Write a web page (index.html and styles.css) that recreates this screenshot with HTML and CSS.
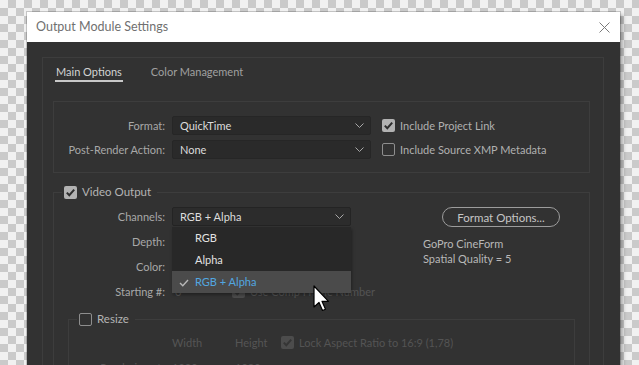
FILE: index.html
```html
<!DOCTYPE html>
<html lang="en">
  <head>
    <meta charset="UTF-8" />
    <title>Output Module Settings</title>
    <link rel="stylesheet" href="styles.css">
  </head>
  <body>
    <div class="dialog">
      <div class="titlebar">
        <span class="title">Output Module Settings</span>
        <svg class="close" width="11" height="11" viewBox="0 0 11 11">
          <path d="M0.5 0.5 L10.5 10.5 M10.5 0.5 L0.5 10.5" stroke="#7a7a7a" stroke-width="1" fill="none" />
        </svg>
      </div>
      <div class="content">
        <div class="tabpanel">
          <div class="tabs">
            <span class="tab active">Main Options</span>
            <span class="tab">Color Management</span>
          </div>

          <div class="group">
            <div class="row">
              <span class="lbl">Format:</span>
              <div class="select wide">
                <span>QuickTime</span>
                <svg class="chev" width="9" height="5" viewBox="0 0 9 5"><path d="M0.5 0.5 L4.5 4.5 L8.5 0.5" stroke="#a8a8a8" fill="none" /></svg>
              </div>
              <span class="check">
                <span class="cb on"><svg width="13" height="13" viewBox="0 0 13 13"><path d="M2.8 6.6 L5.3 9.2 L10.2 3.6" stroke="#2e2e2e" stroke-width="2" fill="none" /></svg></span>
                Include Project Link
              </span>
            </div>
            <div class="row">
              <span class="lbl">Post-Render Action:</span>
              <div class="select wide">
                <span>None</span>
                <svg class="chev" width="9" height="5" viewBox="0 0 9 5"><path d="M0.5 0.5 L4.5 4.5 L8.5 0.5" stroke="#a8a8a8" fill="none" /></svg>
              </div>
              <span class="check">
                <span class="cb"></span>
                Include Source XMP Metadata
              </span>
            </div>
          </div>

          <fieldset class="box">
            <legend>
              <span class="cb on"><svg width="13" height="13" viewBox="0 0 13 13"><path d="M2.8 6.6 L5.3 9.2 L10.2 3.6" stroke="#2e2e2e" stroke-width="2" fill="none" /></svg></span>
              Video Output
            </legend>
            <div class="vbody">
              <div class="fields">
                <div class="row">
                  <span class="lbl">Channels:</span>
                  <div class="select-wrap">
                    <div class="select open">
                      <span>RGB + Alpha</span>
                      <svg class="chev" width="9" height="5" viewBox="0 0 9 5"><path d="M0.5 0.5 L4.5 4.5 L8.5 0.5" stroke="#a8a8a8" fill="none" /></svg>
                    </div>
                    <ul class="popup">
                      <li>RGB</li>
                      <li>Alpha</li>
                      <li class="sel">
                        <svg class="tick" width="10" height="8" viewBox="0 0 10 8"><path d="M1 4 L3.8 6.8 L9 1" stroke="#b8b8b8" stroke-width="1.4" fill="none" /></svg>
                        RGB + Alpha
                      </li>
                    </ul>
                  </div>
                </div>
                <div class="row">
                  <span class="lbl">Depth:</span>
                  <div class="select"></div>
                </div>
                <div class="row">
                  <span class="lbl">Color:</span>
                  <div class="select"></div>
                </div>
                <div class="row">
                  <span class="lbl">Starting #:</span>
                  <span class="num">0</span>
                  <span class="check dim">
                    <span class="cb on"><svg width="13" height="13" viewBox="0 0 13 13"><path d="M2.8 6.6 L5.3 9.2 L10.2 3.6" stroke="#353535" stroke-width="2" fill="none" /></svg></span>
                    Use Comp Frame Number
                  </span>
                </div>
              </div>
              <div class="side">
                <button class="pill">Format Options...</button>
                <div class="info">GoPro CineForm<br />Spatial Quality = 5</div>
              </div>
            </div>

            <fieldset class="box inner">
              <legend>
                <span class="cb"></span>
                Resize
              </legend>
              <div class="rbody">
                <div class="rrow">
                  <span class="rlbl"></span>
                  <span class="col">Width</span>
                  <span class="col">Height</span>
                  <span class="check dim">
                    <span class="cb on"><svg width="13" height="13" viewBox="0 0 13 13"><path d="M2.8 6.6 L5.3 9.2 L10.2 3.6" stroke="#353535" stroke-width="2" fill="none" /></svg></span>
                    Lock Aspect Ratio to 16:9 (1,78)
                  </span>
                </div>
                <div class="rrow">
                  <span class="rlbl">Rendering at:</span>
                  <span class="col">1920</span>
                  <span class="col">1080</span>
                </div>
              </div>
            </fieldset>
          </fieldset>
        </div>
      </div>
    </div>

    <svg class="cursor" width="18" height="28" viewBox="0 0 18 28">
      <path d="M1 1 L1 22 L6 17.5 L9.5 25.5 L12.5 24.2 L9 16.3 L15.5 16.3 Z" fill="#ffffff" stroke="#000000" stroke-width="1.2" stroke-linejoin="round" />
    </svg>
  </body>
</html>
```

FILE: styles.css
```css
* {
  box-sizing: border-box;
  margin: 0;
  padding: 0;
}
body {
  height: 365px;
  overflow: hidden;
  font-family: "Lato", "Liberation Sans", sans-serif;
  font-size: 11px;
  line-height: 16px;
  color: #a8a8a8;
  background-color: #f1f1f1;
  background-image:
    linear-gradient(45deg, #cacaca 25%, transparent 25%, transparent 75%, #cacaca 75%),
    linear-gradient(45deg, #cacaca 25%, transparent 25%, transparent 75%, #cacaca 75%);
  background-size: 16px 16px;
  background-position: 0 0, 8px 8px;
  position: relative;
}
.dialog {
  width: 593px;
  margin: 12px 0 0 27px;
  box-shadow: 0 0 0 1px rgba(0, 0, 0, 0.18), 3px 3px 4px rgba(0, 0, 0, 0.3);
}
.titlebar {
  height: 30px;
  background: #ffffff;
  display: flex;
  align-items: center;
  justify-content: space-between;
  padding: 0 10px 0 9px;
}
.title {
  font-size: 12.5px;
  color: #707070;
}
.content {
  background: #323232;
  padding: 15px 16px 0 15px;
  height: 340px;
}
.tabpanel {
  border: 1px solid #3d3d3d;
  border-bottom: none;
  height: 100%;
}
.tabs {
  display: flex;
  gap: 27px;
  padding: 6px 0 0 12px;
}
.tab {
  padding: 0 1px;
  border-bottom: 2px solid transparent;
  color: #a0a0a0;
  font-size: 11px;
}
.tab.active {
  color: #d2d2d2;
  border-bottom-color: #c8c8c8;
}
.group {
  margin: 19px 13px 0 10px;
  border: 1px solid #3d3d3d;
  padding: 14px 0 13px;
  display: flex;
  flex-direction: column;
  gap: 5px;
}
.row {
  display: flex;
  align-items: center;
  height: 19px;
}
.lbl {
  width: 111px;
  text-align: right;
  margin-right: 7px;
  flex-shrink: 0;
}
.select {
  position: relative;
  width: 179px;
  height: 19px;
  background: #2a2a2a;
  border: 1px solid #262626;
  border-radius: 2px;
  color: #dcdcdc;
  padding-left: 7px;
  display: flex;
  align-items: center;
}
.select.wide {
  width: 199px;
}
.select.open {
  background: #2c2c2c;
  border-color: #242424;
}
.chev {
  position: absolute;
  right: 6px;
  top: 6px;
}
.check {
  display: flex;
  align-items: center;
  gap: 5px;
  margin-left: 11px;
  color: #b0b0b0;
  white-space: nowrap;
}
.check.dim {
  color: #545454;
}
.cb {
  width: 13px;
  height: 13px;
  border: 1.5px solid #8e8e8e;
  border-radius: 2px;
  flex-shrink: 0;
  position: relative;
}
.cb.on {
  background: #b2b2b2;
  border: none;
}
.cb svg {
  display: block;
}
.dim .cb.on {
  background: #4c4c4c;
}
fieldset.box {
  margin: 11px 13px 0 10px;
  border: 1px solid #3d3d3d;
  border-bottom: none;
  padding: 7px 0 0;
  min-width: 0;
  height: 200px;
}
fieldset.box legend {
  margin-left: 8px;
  padding: 0 6px 0 2px;
  display: flex;
  align-items: center;
  gap: 5px;
  height: 16px;
  color: #b4b4b4;
  font-size: 11.5px;
}
.vbody {
  display: flex;
}
.fields {
  width: 297px;
  flex-shrink: 0;
  display: flex;
  flex-direction: column;
  gap: 6px;
}
.select-wrap {
  position: relative;
}
.popup {
  position: absolute;
  left: 0;
  top: 20px;
  width: 179px;
  list-style: none;
  background: #282828;
  box-shadow: 1px 2px 3px rgba(0, 0, 0, 0.35);
  z-index: 5;
}
.popup li {
  height: 22px;
  line-height: 22px;
  padding-left: 23px;
  color: #e2e2e2;
  position: relative;
}
.popup li.sel {
  background: #4b4b4b;
  color: #52a7e0;
}
.tick {
  position: absolute;
  left: 7px;
  top: 8px;
}
.num {
  width: 60px;
  flex-shrink: 0;
  color: #5a5a5a;
  padding-left: 3px;
}
.check.dim {
  margin-left: 0;
}
.side {
  margin-left: 72px;
}
.pill {
  display: block;
  margin-left: 19px;
  width: 118px;
  height: 20px;
  border: 1px solid #9c9c9c;
  border-radius: 10px;
  background: transparent;
  color: #c6c6c6;
  font-family: inherit;
  font-size: 11.5px;
}
.info {
  margin-top: 10px;
  line-height: 14.5px;
  color: #b8b8b8;
}
fieldset.box.inner {
  margin: 10px 14px 0 14px;
  padding-top: 6px;
}
fieldset.box.inner legend {
  margin-left: 8px;
}
.rbody {
  display: flex;
  flex-direction: column;
  gap: 6px;
}
.rrow {
  display: flex;
  align-items: center;
  height: 19px;
  color: #555555;
}
.rlbl {
  width: 103px;
  text-align: right;
  padding-right: 8px;
}
.col {
  width: 63px;
}
.rrow .check.dim {
  margin-left: -17px;
}
.cursor {
  position: absolute;
  left: 313px;
  top: 285px;
  z-index: 10;
}
```
